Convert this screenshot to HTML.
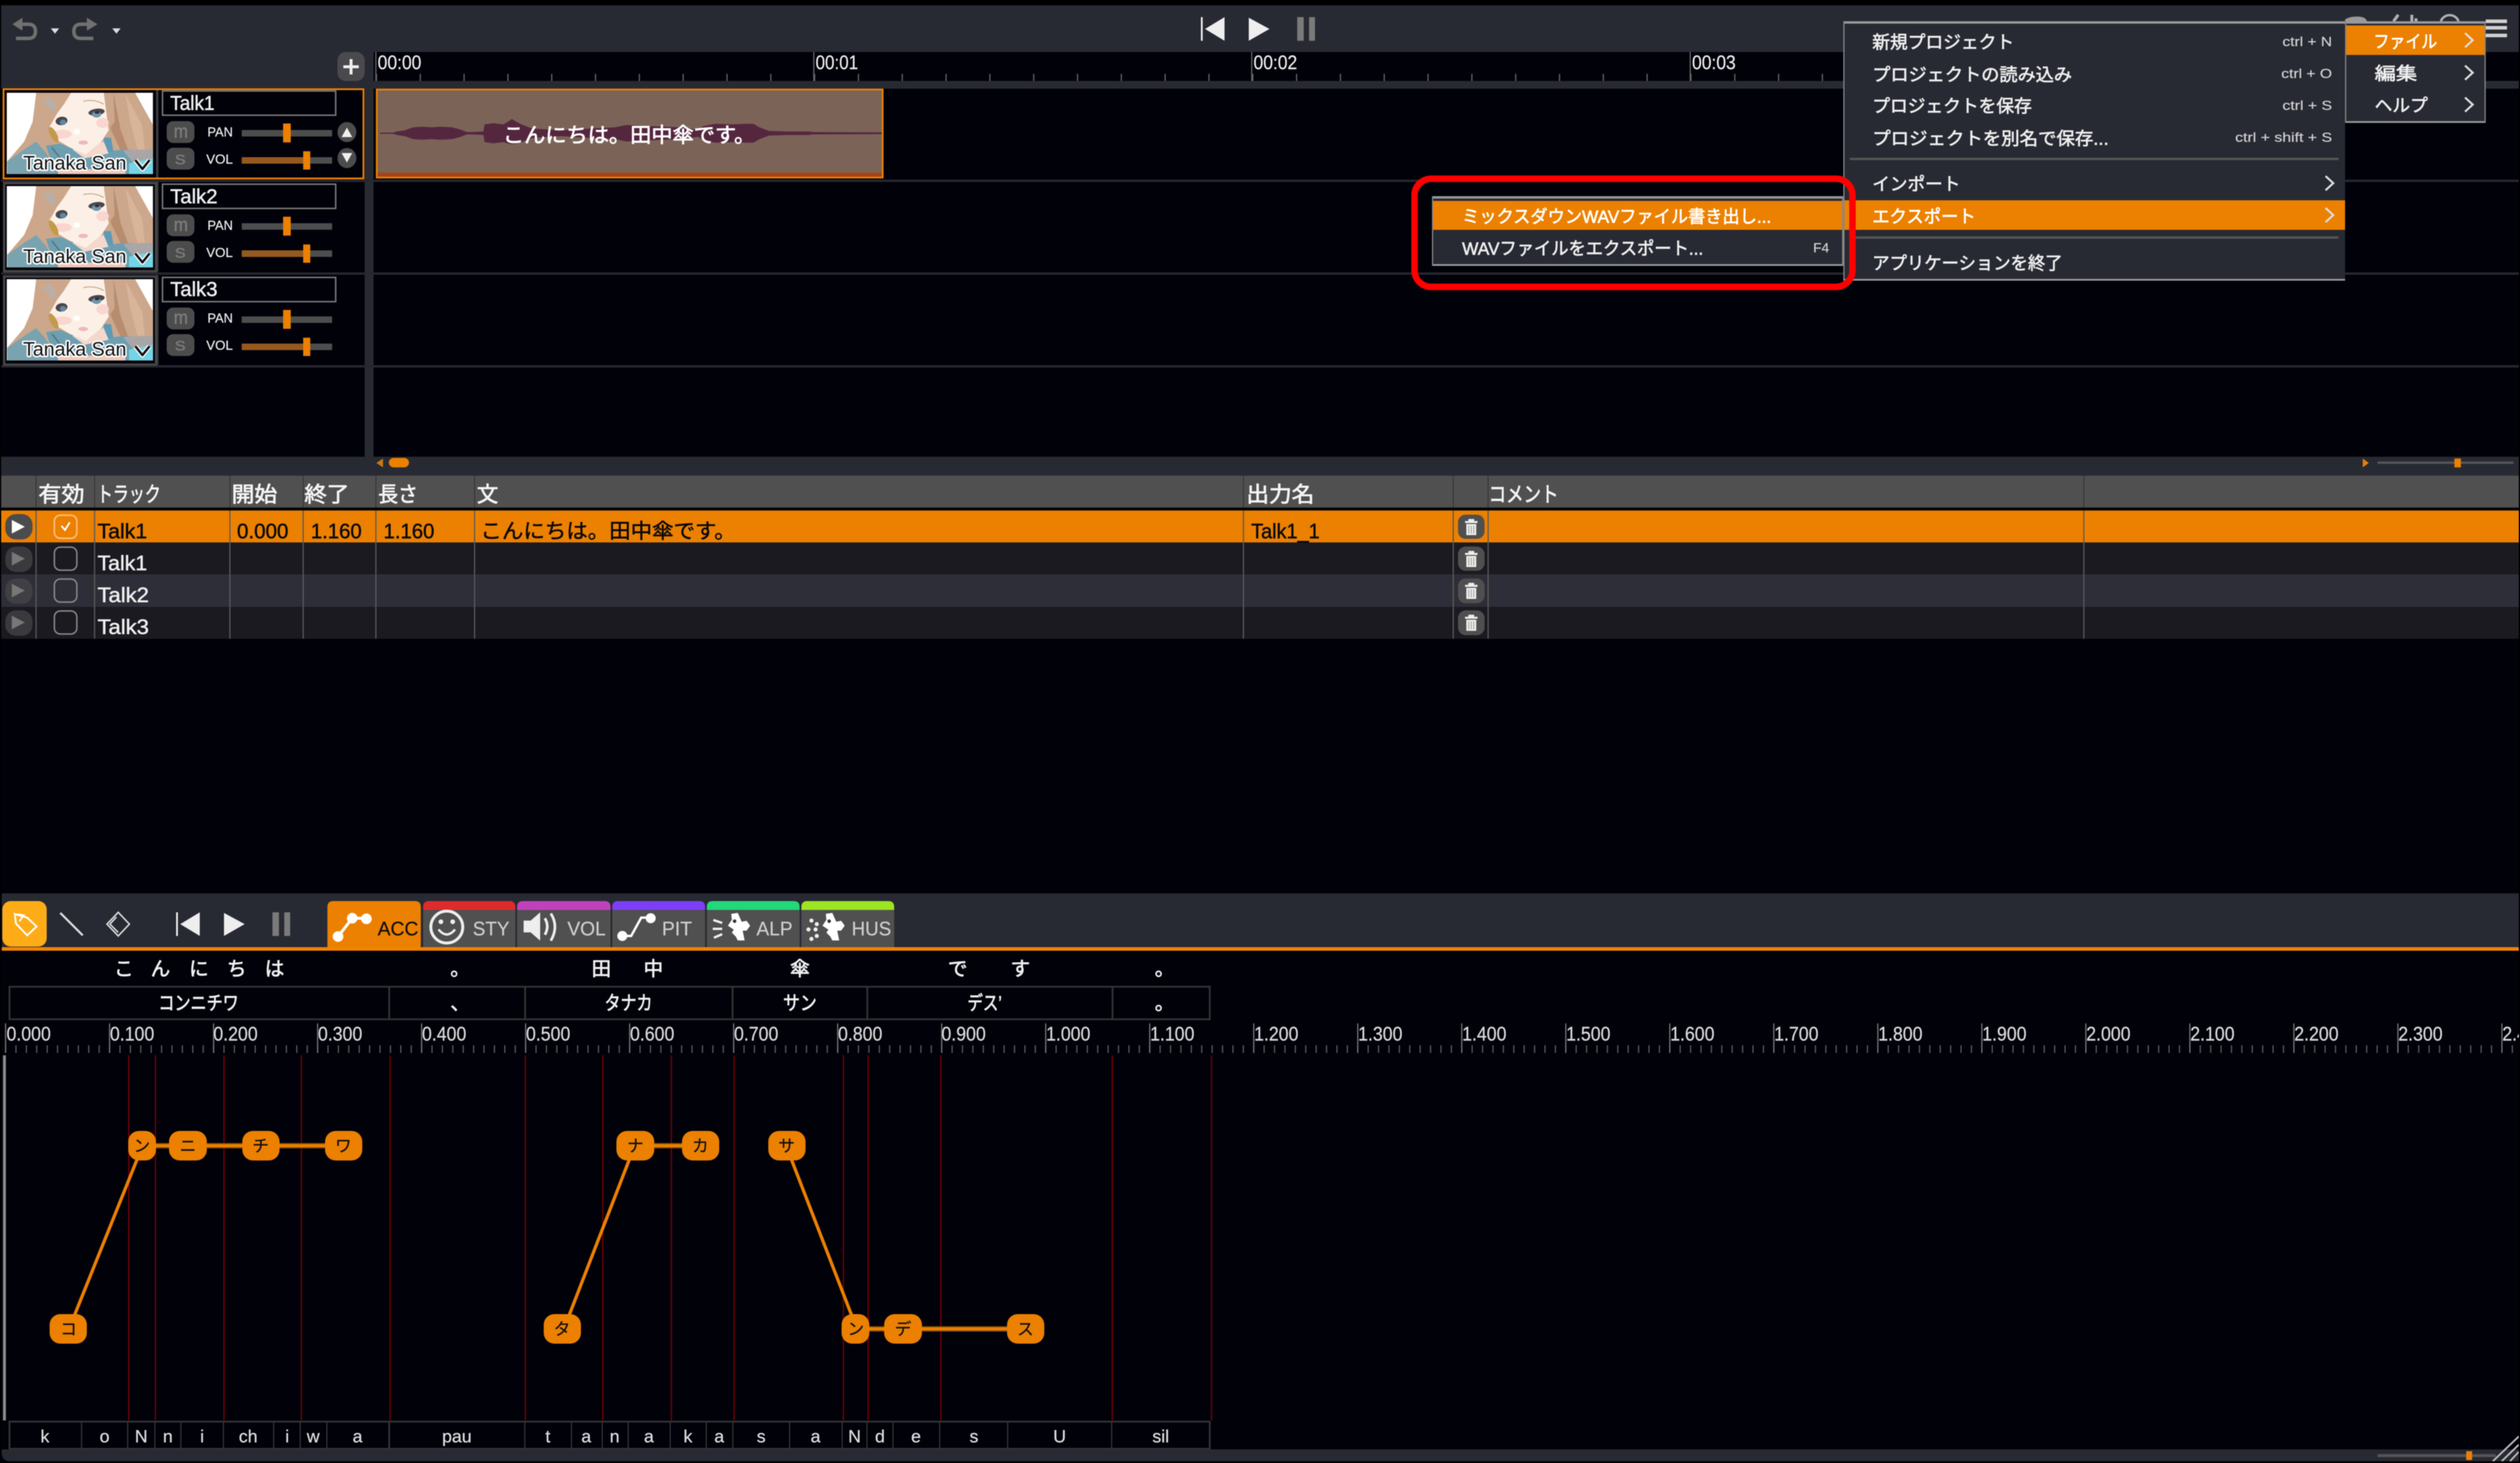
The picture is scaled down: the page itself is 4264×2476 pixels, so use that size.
<!DOCTYPE html>
<html lang="ja">
<head>
<meta charset="utf-8">
<title>Voice editor</title>
<style>
html,body{margin:0;padding:0;background:#01010a;width:4264px;height:2476px;overflow:hidden}
svg{display:block;filter:blur(0.8px)}
text{font-family:"Liberation Sans","Noto Sans CJK JP",sans-serif;color:#eee;fill:currentColor;stroke:currentColor;stroke-width:.7px}
.m{font-size:30px;color:#eee;stroke-width:.9px}
.sc{font-size:22px;color:#cfcfcf;stroke-width:.3px}
.h{font-size:36px;color:#f4f4f4;stroke-width:1.1px}
.b{font-size:35px;color:#0a0a0a}
.w{font-size:35px;color:#eee}
.r{font-size:33px;color:#d8d8d8;stroke-width:.4px}
.n{font-size:28px;color:#111;text-anchor:middle;stroke-width:.4px}
.p{font-size:30px;color:#ddd;text-anchor:middle;stroke-width:.4px}
.k{font-size:33px;color:#f0f0f0;stroke-width:1px}
.t{font-size:33px;color:#ccc;stroke-width:.3px}
.av{font-size:33px;fill:#111;stroke:#fff;stroke-width:5px;paint-order:stroke;stroke-linejoin:round}
.lb{font-size:22px;color:#eee;stroke-width:.3px}
</style>
</head>
<body>
<svg width="4264" height="2476" viewBox="0 0 4264 2476" xmlns="http://www.w3.org/2000/svg">
<defs>
<clipPath id="avc"><rect x="28" y="52" width="606" height="413"/></clipPath>
<g id="avatar" transform="scale(0.40816,0.33333) translate(-28,-52)">
 <g clip-path="url(#avc)">
  <rect x="28" y="52" width="606" height="413" fill="#fff"/>
  <path d="M150,52 L560,52 L634,215 L634,370 L510,345 L360,365 L200,380 L100,385 L30,420 L30,400 L100,300 L135,200Z" fill="#cca78b"/>
  <path d="M440,52 L470,52 L500,240 L530,340 L500,345 L460,240Z" fill="#b88c6e"/>
  <path d="M520,60 L590,220 L600,340 L570,340 L540,200Z" fill="#d8b498"/>
  <path d="M30,400 L100,340 L150,300 L190,355 L230,440 L230,465 L30,465Z" fill="#7aa3b0"/>
  <path d="M190,320 L250,310 L355,365 L510,340 L634,350 L634,465 L230,465Z" fill="#6d9fb0"/>
  <path d="M430,280 L460,280 L470,350 L430,360Z" fill="#5d9ab5"/>
  <path d="M510,345 L634,340 L634,400 L560,420Z" fill="#a9a6a8"/>
  <path d="M535,410 L634,385 L634,465 L535,465Z" fill="#73d5e6"/>
  <path d="M240,440 L520,440 L520,465 L240,465Z" fill="#f0c8b8"/>
  <path d="M300,340 L430,300 L450,360 L350,385Z" fill="#f4d8cc"/>
  <path d="M250,52 L440,52 L452,130 L452,240 L420,300 L355,365 L290,330 L235,290 L205,230 L215,180Z" fill="#fcf0e6"/>
  <path d="M150,52 L295,52 L265,110 L235,160 L210,215 L190,210 L160,160Z" fill="#cca78b"/>
  <path d="M430,52 L470,52 L475,200 L450,240Z" fill="#cca78b"/>
  <path d="M205,70 L180,100 L215,150 L235,130Z" fill="#b8b0a8"/>
  <path d="M345,95 Q390,82 430,110" stroke="#c8a888" stroke-width="5" fill="none"/>
  <ellipse cx="260" cy="262" rx="38" ry="22" fill="#f9d6d0"/>
  <ellipse cx="425" cy="205" rx="26" ry="26" fill="#f9d6d0"/>
  <circle cx="318" cy="250" r="14" fill="#fff"/>
  <ellipse cx="255" cy="195" rx="25" ry="21" transform="rotate(-20 255 195)" fill="#4a474b"/>
  <ellipse cx="261" cy="202" rx="13" ry="14" fill="#5e88a5"/>
  <ellipse cx="400" cy="150" rx="34" ry="17" transform="rotate(-10 400 150)" fill="#4a474b"/>
  <ellipse cx="400" cy="162" rx="19" ry="16" fill="#6e96ae"/>
  <ellipse cx="402" cy="152" rx="10" ry="7" fill="#332f30"/>
  <ellipse cx="345" cy="305" rx="20" ry="11" fill="#eeb8c0"/>
  <ellipse cx="222" cy="265" rx="14" ry="42" transform="rotate(-22 222 265)" fill="#c49a4a"/>
  <path d="M215,330 L260,400" stroke="#55707d" stroke-width="6"/>
 </g>
</g>
<pattern id="tk1" patternUnits="userSpaceOnUse" x="636" y="125" width="74.14" height="12"><rect width="2" height="12" fill="#666"/></pattern>
<pattern id="tk2" patternUnits="userSpaceOnUse" x="8.4" y="1769" width="17.6" height="13"><rect width="2" height="13" fill="#5c5c5c"/></pattern>
<pattern id="tk3" patternUnits="userSpaceOnUse" x="8.4" y="1732" width="176" height="50"><rect width="2" height="50" fill="#777"/></pattern>
<path id="trash" d="M-7,-16 h14 v4 h8 v4 h-30 v-4 h8Z M-12,-6 h24 v22 h-24Z" fill="#eee"/>
<g id="prev"><rect x="298" y="1544" width="3" height="40" fill="#eee"/><path d="M338,1544 V1584 L305,1564Z" fill="#eee"/></g>
<path id="play" d="M379,1545 L414,1564 L379,1584Z" fill="#eee"/>
<g id="pause" fill="#7a7a7a"><rect x="461" y="1544" width="11" height="40"/><rect x="481" y="1544" width="10" height="40"/></g>
<g id="head"><path d="M712,110 L745,105 L765,150 L790,145 L808,170 L790,195 L770,195 L780,245 L745,245 L735,225 L715,205 L725,190 L695,170 L715,140Z" fill="#fff" transform="translate(1000,1510) scale(0.3333) translate(0,0)"/></g>
<g id="tr">
 <rect x="282" y="205" width="47" height="37" rx="11" fill="#4c4c4c"/>
 <rect x="282" y="250" width="47" height="37" rx="11" fill="#4c4c4c"/>
 <rect x="409" y="220" width="153" height="11" fill="#4d4d4d"/>
 <rect x="409" y="266" width="153" height="11" fill="#4d4d4d"/>
 <rect x="409" y="266" width="110" height="11" fill="#96591f"/>
 <rect x="479" y="209" width="13" height="32" fill="#ec8000"/>
 <rect x="513" y="256" width="12" height="31" fill="#ec8000"/>
 <rect x="264" y="150" width="4" height="152" fill="#3a3b40"/>
 <rect x="275" y="154" width="293" height="41" fill="#01010a" stroke="#7a7a7a" stroke-width="2.5"/>
</g>
</defs>

<rect width="4264" height="2476" fill="#01010a"/>
<rect width="4264" height="9" fill="#000"/>

<!-- top toolbar -->
<rect x="2" y="9" width="4260" height="79" fill="#282a33"/>
<rect x="2" y="88" width="630" height="62" fill="#282a33"/>
<rect x="632" y="137" width="3630" height="13" fill="#282a33"/>
<rect x="617" y="150" width="15" height="623" fill="#282a33"/>

<g fill="none" stroke="#707070" stroke-width="6">
 <path d="M27,65 H48 Q60,65 60,53 Q60,41 48,41 H32"/>
 <path d="M158,65 H137 Q125,65 125,53 Q125,41 137,41 H153"/>
</g>
<path d="M38,30 V52 L21,41Z M147,30 V52 L165,41Z" fill="#707070"/>
<path d="M86,48 H100 L93,57Z M190,48 H204 L197,57Z" fill="#ddd"/>

<use href="#prev" transform="translate(1734,-1515)"/>
<use href="#play" transform="translate(1734,-1515)"/>
<use href="#pause" transform="translate(1734,-1515)"/>

<!-- top-right icons peeking out -->
<path d="M3968,36 V33 Q3975,28 3988,28 Q4003,28 4005,36Z" fill="#9a9a9a"/>
<path d="M4050,36 L4058,25 M4081,36 V25 M4088,36 V31" stroke="#b0b0b0" stroke-width="5" fill="none"/>
<path d="M4130,36 A16,16 0 0 1 4160,36" stroke="#b0b0b0" stroke-width="4" fill="none"/>
<g fill="#d0d0d0"><rect x="4206" y="33" width="36" height="6"/><rect x="4206" y="44" width="36" height="6"/><rect x="4206" y="57" width="36" height="6"/></g>

<!-- add button -->
<rect x="571" y="88" width="46" height="49" rx="14" fill="#4a4a4e"/>
<path d="M594,100 V126 M581,113 H607" stroke="#eee" stroke-width="5"/>

<!-- ruler -->
<rect x="632" y="88" width="3630" height="49" fill="#01010a"/>
<rect x="636" y="125" width="3626" height="12" fill="url(#tk1)"/>
<g fill="#666"><rect x="635" y="88" width="2" height="49"/><rect x="1376" y="88" width="2" height="49"/><rect x="2117" y="88" width="2" height="49"/><rect x="2859" y="88" width="2" height="49"/></g>
<text x="639" y="117" font-size="33" textLength="74" lengthAdjust="spacingAndGlyphs" style="stroke-width:.3px">00:00</text>
<text x="1380" y="117" font-size="33" textLength="72" lengthAdjust="spacingAndGlyphs" style="stroke-width:.3px">00:01</text>
<text x="2121" y="117" font-size="33" textLength="74" lengthAdjust="spacingAndGlyphs" style="stroke-width:.3px">00:02</text>
<text x="2863" y="117" font-size="33" textLength="74" lengthAdjust="spacingAndGlyphs" style="stroke-width:.3px">00:03</text>

<!-- track row separators -->
<g fill="#26272e"><rect x="2" y="304" width="4260" height="4"/><rect x="2" y="461" width="4260" height="4"/><rect x="2" y="618" width="4260" height="4"/></g>

<!-- tracks -->
<use href="#tr"/>
<use href="#tr" transform="translate(0,157.75)"/>
<use href="#tr" transform="translate(0,315.5)"/>
<rect x="6" y="151" width="609" height="151" fill="none" stroke="#ec8000" stroke-width="3"/>
<rect x="7" y="310" width="257" height="149" fill="none" stroke="#444" stroke-width="4"/>
<rect x="7" y="468" width="257" height="149" fill="none" stroke="#444" stroke-width="4"/>
<use href="#avatar" transform="translate(11.5,157)"/>
<use href="#avatar" transform="translate(11.5,315)"/>
<use href="#avatar" transform="translate(11.5,472.5)"/>

<text class="av" x="39" y="287" textLength="175" lengthAdjust="spacingAndGlyphs">Tanaka San</text>
<text class="av" x="39" y="445" textLength="175" lengthAdjust="spacingAndGlyphs">Tanaka San</text>
<text class="av" x="39" y="602" textLength="175" lengthAdjust="spacingAndGlyphs">Tanaka San</text>
<g fill="none" stroke-linejoin="round">
 <path d="M229,271 L241,286 L253,271" stroke="#fff" stroke-width="8"/><path d="M229,271 L241,286 L253,271" stroke="#111" stroke-width="4"/>
 <path d="M229,429 L241,444 L253,429" stroke="#fff" stroke-width="8"/><path d="M229,429 L241,444 L253,429" stroke="#111" stroke-width="4"/>
 <path d="M229,586 L241,601 L253,586" stroke="#fff" stroke-width="8"/><path d="M229,586 L241,601 L253,586" stroke="#111" stroke-width="4"/>
</g>

<text x="288" y="186" font-size="34" textLength="75" lengthAdjust="spacingAndGlyphs">Talk1</text>
<text x="288" y="344" font-size="34" textLength="80" lengthAdjust="spacingAndGlyphs">Talk2</text>
<text x="288" y="501" font-size="34" textLength="80" lengthAdjust="spacingAndGlyphs">Talk3</text>

<g>
 <text x="294" y="233" font-size="32" style="color:#7a7a7a" textLength="24" lengthAdjust="spacingAndGlyphs">m</text>
 <text x="296" y="278" font-size="23" style="color:#7a7a7a" textLength="18" lengthAdjust="spacingAndGlyphs">S</text>
 <text x="294" y="391" font-size="32" style="color:#7a7a7a" textLength="24" lengthAdjust="spacingAndGlyphs">m</text>
 <text x="296" y="436" font-size="23" style="color:#7a7a7a" textLength="18" lengthAdjust="spacingAndGlyphs">S</text>
 <text x="294" y="548" font-size="32" style="color:#7a7a7a" textLength="24" lengthAdjust="spacingAndGlyphs">m</text>
 <text x="296" y="593" font-size="23" style="color:#7a7a7a" textLength="18" lengthAdjust="spacingAndGlyphs">S</text>
</g>
<text class="lb" x="351" y="231" textLength="43" lengthAdjust="spacingAndGlyphs">PAN</text>
<text class="lb" x="349" y="277" textLength="45" lengthAdjust="spacingAndGlyphs">VOL</text>
<text class="lb" x="351" y="389" textLength="43" lengthAdjust="spacingAndGlyphs">PAN</text>
<text class="lb" x="349" y="435" textLength="45" lengthAdjust="spacingAndGlyphs">VOL</text>
<text class="lb" x="351" y="546" textLength="43" lengthAdjust="spacingAndGlyphs">PAN</text>
<text class="lb" x="349" y="592" textLength="45" lengthAdjust="spacingAndGlyphs">VOL</text>

<ellipse cx="587" cy="223.5" rx="16" ry="17" fill="#4c4c4c"/>
<ellipse cx="587" cy="267.5" rx="16" ry="17" fill="#4c4c4c"/>
<path d="M587,216 L596,232 H578Z M578,259 H596 L587,275Z" fill="#f0f0f0"/>

<!-- clip -->
<rect x="636" y="150" width="859" height="152" fill="#7b6358"/>
<rect x="638" y="292" width="855" height="8" fill="#a3431a"/>
<path d="M643,224.5 L665,224.5 L672,222.5 L685,220.5 L699,215.5 L715,214.5 L730,215.5 L745,214.5 L765,215.5 L780,219.5 L790,223.5 L800,223.5 L818,222.5 L820,210.5 L835,208.5 L852,210.5 L860,205.5 L866,201.5 L880,209.5 L900,217.5 L950,220.5 L1000,217.5 L1040,215.5 L1060,211.5 L1100,213.5 L1150,215.5 L1182,219.5 L1190,213.5 L1210,209.5 L1240,210.5 L1262,209.5 L1275,209.5 L1285,215.5 L1301,221.5 L1330,222.5 L1368,222.5 L1375,223.5 L1492,224 L1492,227 L1375,227.5 L1368,228.5 L1330,228.5 L1301,229.5 L1285,235.5 L1275,241.5 L1262,241.5 L1240,240.5 L1210,241.5 L1190,237.5 L1182,231.5 L1150,235.5 L1100,237.5 L1060,239.5 L1040,235.5 L1000,233.5 L950,230.5 L900,233.5 L880,241.5 L866,244 L860,243 L852,240.5 L835,242.5 L820,240.5 L818,228.5 L800,227.5 L790,227.5 L780,231.5 L765,235.5 L745,236.5 L730,235.5 L715,236.5 L699,235.5 L685,230.5 L672,228.5 L665,226.5 L643,226.5Z" fill="#55273f"/>
<rect x="637.5" y="151.5" width="856" height="149" fill="none" stroke="#ec8000" stroke-width="3"/>
<text x="851" y="241" font-size="35" style="color:#fff;stroke-width:1px" textLength="427" lengthAdjust="spacingAndGlyphs">こんにちは。田中傘です。</text>

<!-- scroll band -->
<rect x="2" y="773" width="4260" height="32" fill="#282a33"/>
<path d="M648,776 V791 L637,783.5Z" fill="#c97a10"/>
<rect x="658" y="775" width="34" height="16" rx="8" fill="#ec8000"/>
<path d="M3998,776 V791 L4008,783.5Z" fill="#ec8000"/>
<rect x="4023" y="781" width="230" height="4" fill="#555"/>
<rect x="4153" y="776" width="11" height="15" fill="#ec8000"/>

<!-- table -->
<rect x="2" y="805" width="4260" height="54" fill="#505050"/>
<rect x="2" y="859" width="4260" height="5" fill="#050505"/>
<rect x="2" y="864" width="4260" height="54" fill="#ec8000"/>
<rect x="2" y="918" width="4260" height="54" fill="#1a1a20"/>
<rect x="2" y="972" width="4260" height="55" fill="#2d2e38"/>
<rect x="2" y="1027" width="4260" height="54" fill="#1a1a20"/>
<g fill="#5a5a5a">
 <rect x="60" y="864" width="2" height="217"/><rect x="159" y="864" width="2" height="217"/><rect x="388" y="864" width="2" height="217"/><rect x="512" y="864" width="2" height="217"/><rect x="635" y="864" width="2" height="217"/><rect x="802" y="864" width="2" height="217"/><rect x="2103" y="864" width="2" height="217"/><rect x="2458" y="864" width="2" height="217"/><rect x="2517" y="864" width="2" height="217"/><rect x="3525" y="864" width="2" height="217"/>
</g>
<g fill="#3a3a3a">
 <rect x="60" y="805" width="2" height="54"/><rect x="159" y="805" width="2" height="54"/><rect x="388" y="805" width="2" height="54"/><rect x="512" y="805" width="2" height="54"/><rect x="635" y="805" width="2" height="54"/><rect x="802" y="805" width="2" height="54"/><rect x="2103" y="805" width="2" height="54"/><rect x="2458" y="805" width="2" height="54"/><rect x="2517" y="805" width="2" height="54"/><rect x="3525" y="805" width="2" height="54"/>
</g>
<text class="h" x="65" y="849" textLength="78" lengthAdjust="spacingAndGlyphs">有効</text>
<text class="h" x="164" y="849" textLength="108" lengthAdjust="spacingAndGlyphs">トラック</text>
<text class="h" x="392" y="849" textLength="77" lengthAdjust="spacingAndGlyphs">開始</text>
<text class="h" x="515" y="849" textLength="76" lengthAdjust="spacingAndGlyphs">終了</text>
<text class="h" x="640" y="849" textLength="67" lengthAdjust="spacingAndGlyphs">長さ</text>
<text class="h" x="807" y="849">文</text>
<text class="h" x="2109" y="849" textLength="115" lengthAdjust="spacingAndGlyphs">出力名</text>
<text class="h" x="2519" y="849" textLength="118" lengthAdjust="spacingAndGlyphs">コメント</text>

<rect x="9" y="870" width="46" height="43" rx="18" fill="#4c4c4c"/>
<rect x="9" y="925" width="46" height="43" rx="18" fill="#3a3a3e"/>
<rect x="9" y="979" width="46" height="43" rx="18" fill="#3f3f44"/>
<rect x="9" y="1033" width="46" height="43" rx="18" fill="#3a3a3e"/>
<path d="M20,880 L42,891.5 L20,903Z" fill="#fff"/>
<path d="M20,934 L42,945.5 L20,957Z M20,988 L42,999.5 L20,1011Z M20,1042 L42,1053.5 L20,1065Z" fill="#777"/>

<g fill="none" stroke-width="2.5">
 <rect x="92" y="872" width="38" height="39" rx="10" stroke="#ffc080"/>
 <rect x="92" y="926" width="38" height="39" rx="10" stroke="#888"/>
 <rect x="92" y="980" width="38" height="39" rx="10" stroke="#888"/>
 <rect x="92" y="1034" width="38" height="39" rx="10" stroke="#888"/>
</g>
<path d="M104,890 L110,897 L118,884" fill="none" stroke="#fff" stroke-width="3"/>

<text class="b" x="165" y="911" textLength="84" lengthAdjust="spacingAndGlyphs">Talk1</text>
<text class="b" x="401" y="911" font-size="36" textLength="87" lengthAdjust="spacingAndGlyphs">0.000</text>
<text class="b" x="526" y="911" font-size="36" textLength="86" lengthAdjust="spacingAndGlyphs">1.160</text>
<text class="b" x="649" y="911" font-size="36" textLength="86" lengthAdjust="spacingAndGlyphs">1.160</text>
<text class="b" x="813" y="911" textLength="432" lengthAdjust="spacingAndGlyphs">こんにちは。田中傘です。</text>
<text class="b" x="2117" y="911" textLength="116" lengthAdjust="spacingAndGlyphs">Talk1_1</text>
<text class="w" x="165" y="965" textLength="84" lengthAdjust="spacingAndGlyphs">Talk1</text>
<text class="w" x="165" y="1019" textLength="87" lengthAdjust="spacingAndGlyphs">Talk2</text>
<text class="w" x="165" y="1073" textLength="87" lengthAdjust="spacingAndGlyphs">Talk3</text>

<rect x="2467" y="871" width="45" height="41" rx="13" fill="#4f4f4f"/>
<rect x="2467" y="925" width="45" height="41" rx="13" fill="#4f4f4f"/>
<rect x="2467" y="979" width="45" height="42" rx="13" fill="#4f4f4f"/>
<rect x="2467" y="1033" width="45" height="42" rx="13" fill="#4f4f4f"/>
<g transform="translate(2489.5,892) scale(.7,.85)"><use href="#trash"/><path d="M-6,-3 V13 M0,-3 V13 M6,-3 V13" stroke="#999" stroke-width="2"/></g>
<g transform="translate(2489.5,946) scale(.7,.85)"><use href="#trash"/><path d="M-6,-3 V13 M0,-3 V13 M6,-3 V13" stroke="#999" stroke-width="2"/></g>
<g transform="translate(2489.5,1000) scale(.7,.85)"><use href="#trash"/><path d="M-6,-3 V13 M0,-3 V13 M6,-3 V13" stroke="#999" stroke-width="2"/></g>
<g transform="translate(2489.5,1054) scale(.7,.85)"><use href="#trash"/><path d="M-6,-3 V13 M0,-3 V13 M6,-3 V13" stroke="#999" stroke-width="2"/></g>

<!-- lower toolbar -->
<rect x="3" y="1512" width="4259" height="91" fill="#282a33"/>
<rect x="3" y="1603" width="4259" height="6" fill="#f08400"/>
<rect x="4" y="1525" width="75" height="77" rx="14" fill="#fdac17"/>
<path d="M25,1547 L46,1553 L62,1568 L46,1583 L27,1563Z M25,1547 L40,1549 L33,1559" fill="none" stroke="#fff" stroke-width="3"/>
<path d="M102,1545 L140,1583" stroke="#ddd" stroke-width="3.5"/>
<path d="M200,1544 L219,1564 L200,1584 L181,1564Z M197,1552 L186,1564 L200,1578" fill="none" stroke="#ddd" stroke-width="2.5"/>
<use href="#prev"/><use href="#play"/><use href="#pause"/>

<!-- tabs -->
<path d="M554,1603 V1535 Q554,1525 564,1525 H702 Q712,1525 712,1535 V1603Z" fill="#ec8000"/>
<path d="M716,1603 V1535 Q716,1525 726,1525 H862 Q872,1525 872,1535 V1603Z" fill="#505050"/>
<path d="M716,1540 V1535 Q716,1525 726,1525 H862 Q872,1525 872,1535 V1540Z" fill="#dc2c2c"/>
<path d="M875,1603 V1535 Q875,1525 885,1525 H1023 Q1033,1525 1033,1535 V1603Z" fill="#505050"/>
<path d="M875,1540 V1535 Q875,1525 885,1525 H1023 Q1033,1525 1033,1535 V1540Z" fill="#bf42bb"/>
<path d="M1036,1603 V1535 Q1036,1525 1046,1525 H1183 Q1193,1525 1193,1535 V1603Z" fill="#505050"/>
<path d="M1036,1540 V1535 Q1036,1525 1046,1525 H1183 Q1193,1525 1193,1535 V1540Z" fill="#7c3ff5"/>
<path d="M1196,1603 V1535 Q1196,1525 1206,1525 H1343 Q1353,1525 1353,1535 V1603Z" fill="#505050"/>
<path d="M1196,1540 V1535 Q1196,1525 1206,1525 H1343 Q1353,1525 1353,1535 V1540Z" fill="#22d87a"/>
<path d="M1356,1603 V1535 Q1356,1525 1366,1525 H1503 Q1513,1525 1513,1535 V1603Z" fill="#505050"/>
<path d="M1356,1540 V1535 Q1356,1525 1366,1525 H1503 Q1513,1525 1513,1535 V1540Z" fill="#9ce522"/>

<!-- tab icons -->
<g fill="#fff"><circle cx="572" cy="1585" r="9"/><circle cx="596" cy="1554" r="9"/><circle cx="620" cy="1555" r="9"/></g>
<path d="M572,1585 L596,1554 H620" stroke="#fff" stroke-width="5" fill="none"/>
<text x="639" y="1583" class="t" style="color:#111" textLength="69" lengthAdjust="spacingAndGlyphs">ACC</text>

<circle cx="756" cy="1569" r="27" fill="none" stroke="#eee" stroke-width="5"/>
<circle cx="746" cy="1560" r="4" fill="#eee"/><circle cx="766" cy="1560" r="4" fill="#eee"/>
<path d="M742,1573 Q756,1590 770,1573" fill="none" stroke="#eee" stroke-width="4"/>
<text x="800" y="1583" class="t" textLength="62" lengthAdjust="spacingAndGlyphs">STY</text>

<path d="M886,1558 H898 L914,1544 V1592 L898,1578 H886Z" fill="#eee"/>
<path d="M922,1554 Q930,1568 922,1582 M932,1546 Q946,1568 932,1592" fill="none" stroke="#eee" stroke-width="4.5"/>
<text x="960" y="1583" class="t" textLength="65" lengthAdjust="spacingAndGlyphs">VOL</text>

<circle cx="1053" cy="1584" r="8.5" fill="#fff"/><circle cx="1101" cy="1554" r="8.5" fill="#fff"/>
<path d="M1053,1584 H1068 L1085,1553 H1101" fill="none" stroke="#fff" stroke-width="4"/>
<text x="1120" y="1583" class="t" textLength="51" lengthAdjust="spacingAndGlyphs">PIT</text>

<path d="M1207,1557 L1222,1562 M1206,1572 H1222 M1208,1587 L1222,1581" stroke="#eee" stroke-width="4"/>
<use href="#head"/>
<circle cx="1243" cy="1559" r="3" fill="#333"/>
<text x="1280" y="1583" class="t" textLength="61" lengthAdjust="spacingAndGlyphs">ALP</text>

<g fill="#eee"><circle cx="1373" cy="1558" r="3.5"/><circle cx="1382" cy="1564" r="3.5"/><circle cx="1368" cy="1573" r="3.5"/><circle cx="1380" cy="1573" r="3.5"/><circle cx="1382" cy="1584" r="3.5"/><circle cx="1373" cy="1589" r="3.5"/></g>
<use href="#head" transform="translate(160,0)"/>
<circle cx="1403" cy="1559" r="3" fill="#333"/>
<text x="1441" y="1583" class="t" textLength="67" lengthAdjust="spacingAndGlyphs">HUS</text>

<!-- sentence row -->
<g>
<text class="k" x="193" y="1651">こ</text>
<text class="k" x="255" y="1651">ん</text>
<text class="k" x="320" y="1651">に</text>
<text class="k" x="384" y="1651">ち</text>
<text class="k" x="448" y="1651">は</text>
<text class="k" x="762" y="1651">。</text>
<text class="k" x="1001" y="1651">田</text>
<text class="k" x="1089" y="1651">中</text>
<text class="k" x="1337" y="1651">傘</text>
<text class="k" x="1604" y="1651">で</text>
<text class="k" x="1710" y="1651">す</text>
<text class="k" x="1954" y="1651">。</text>
</g>

<!-- kana row -->
<rect x="16" y="1670" width="2031" height="55" fill="none" stroke="#333" stroke-width="3"/>
<g fill="#333"><rect x="657" y="1670" width="3" height="55"/><rect x="887" y="1670" width="3" height="55"/><rect x="1238" y="1670" width="3" height="55"/><rect x="1466" y="1670" width="3" height="55"/><rect x="1881" y="1670" width="3" height="55"/></g>
<text class="k" x="268" y="1709" textLength="136" lengthAdjust="spacingAndGlyphs">コンニチワ</text>
<text class="k" x="762" y="1709">、</text>
<text class="k" x="1023" y="1709" textLength="81" lengthAdjust="spacingAndGlyphs">タナカ</text>
<text class="k" x="1325" y="1709" textLength="57" lengthAdjust="spacingAndGlyphs">サン</text>
<text class="k" x="1637" y="1709" textLength="58" lengthAdjust="spacingAndGlyphs">デス’</text>
<text class="k" x="1954" y="1709">。</text>

<!-- time ruler -->
<rect x="8" y="1769" width="4254" height="13" fill="url(#tk2)"/>
<rect x="8" y="1732" width="4254" height="50" fill="url(#tk3)"/>
<g>
<text class="r" x="11" y="1761" textLength="75" lengthAdjust="spacingAndGlyphs">0.000</text>
<text class="r" x="186" y="1761" textLength="75" lengthAdjust="spacingAndGlyphs">0.100</text>
<text class="r" x="361" y="1761" textLength="75" lengthAdjust="spacingAndGlyphs">0.200</text>
<text class="r" x="538" y="1761" textLength="75" lengthAdjust="spacingAndGlyphs">0.300</text>
<text class="r" x="714" y="1761" textLength="75" lengthAdjust="spacingAndGlyphs">0.400</text>
<text class="r" x="890" y="1761" textLength="75" lengthAdjust="spacingAndGlyphs">0.500</text>
<text class="r" x="1066" y="1761" textLength="75" lengthAdjust="spacingAndGlyphs">0.600</text>
<text class="r" x="1242" y="1761" textLength="75" lengthAdjust="spacingAndGlyphs">0.700</text>
<text class="r" x="1418" y="1761" textLength="75" lengthAdjust="spacingAndGlyphs">0.800</text>
<text class="r" x="1593" y="1761" textLength="75" lengthAdjust="spacingAndGlyphs">0.900</text>
<text class="r" x="1770" y="1761" textLength="75" lengthAdjust="spacingAndGlyphs">1.000</text>
<text class="r" x="1946" y="1761" textLength="75" lengthAdjust="spacingAndGlyphs">1.100</text>
<text class="r" x="2122" y="1761" textLength="75" lengthAdjust="spacingAndGlyphs">1.200</text>
<text class="r" x="2298" y="1761" textLength="75" lengthAdjust="spacingAndGlyphs">1.300</text>
<text class="r" x="2474" y="1761" textLength="75" lengthAdjust="spacingAndGlyphs">1.400</text>
<text class="r" x="2650" y="1761" textLength="75" lengthAdjust="spacingAndGlyphs">1.500</text>
<text class="r" x="2826" y="1761" textLength="75" lengthAdjust="spacingAndGlyphs">1.600</text>
<text class="r" x="3002" y="1761" textLength="75" lengthAdjust="spacingAndGlyphs">1.700</text>
<text class="r" x="3178" y="1761" textLength="75" lengthAdjust="spacingAndGlyphs">1.800</text>
<text class="r" x="3354" y="1761" textLength="75" lengthAdjust="spacingAndGlyphs">1.900</text>
<text class="r" x="3530" y="1761" textLength="75" lengthAdjust="spacingAndGlyphs">2.000</text>
<text class="r" x="3706" y="1761" textLength="75" lengthAdjust="spacingAndGlyphs">2.100</text>
<text class="r" x="3882" y="1761" textLength="75" lengthAdjust="spacingAndGlyphs">2.200</text>
<text class="r" x="4058" y="1761" textLength="75" lengthAdjust="spacingAndGlyphs">2.300</text>
<text class="r" x="4234" y="1761" textLength="75" lengthAdjust="spacingAndGlyphs">2.400</text>
</g>

<!-- editor lines -->
<rect x="5" y="1786" width="5" height="618" fill="#8a8a8a"/>
<g fill="#7d0000">
<rect x="217" y="1786" width="2" height="618"/><rect x="262" y="1786" width="2" height="618"/><rect x="378" y="1786" width="2" height="618"/><rect x="509" y="1786" width="2" height="618"/><rect x="659" y="1786" width="2" height="618"/><rect x="888" y="1786" width="2" height="618"/><rect x="1019" y="1786" width="2" height="618"/><rect x="1135" y="1786" width="2" height="618"/><rect x="1241" y="1786" width="2" height="618"/><rect x="1426" y="1786" width="2" height="618"/><rect x="1468" y="1786" width="2" height="618"/><rect x="1591" y="1786" width="2" height="618"/><rect x="1881" y="1786" width="2" height="618"/><rect x="2049" y="1786" width="2" height="618"/>
</g>

<!-- accent links -->
<g stroke="#8a5000" stroke-width="9"><path d="M264,1939 H286 M350,1939 H410 M473,1939 H550 M1107,1939 H1154 M1471,2249 H1496 M1560,2249 H1704"/></g>
<g stroke="#ec8000" stroke-width="5"><path d="M264,1939 H286 M350,1939 H410 M473,1939 H550 M1107,1939 H1154 M1471,2249 H1496 M1560,2249 H1704"/></g>
<g stroke="#ec8000" stroke-width="5.5" fill="none"><path d="M126,2226 L232,1962 M963,2226 L1065,1962 M1339,1962 L1441,2226"/></g>
<g fill="#ec8000">
<rect x="84" y="2224" width="63" height="50" rx="18"/>
<rect x="217" y="1914" width="47" height="50" rx="18"/>
<rect x="286" y="1914" width="64" height="50" rx="18"/>
<rect x="410" y="1914" width="63" height="50" rx="18"/>
<rect x="550" y="1914" width="63" height="50" rx="18"/>
<rect x="920" y="2224" width="63" height="50" rx="18"/>
<rect x="1043" y="1914" width="64" height="50" rx="18"/>
<rect x="1154" y="1914" width="63" height="50" rx="18"/>
<rect x="1300" y="1914" width="63" height="50" rx="18"/>
<rect x="1424" y="2224" width="47" height="50" rx="18"/>
<rect x="1496" y="2224" width="64" height="50" rx="18"/>
<rect x="1704" y="2224" width="63" height="50" rx="18"/>
</g>
<text class="n" x="116" y="2259">コ</text>
<text class="n" x="240" y="1949">ン</text>
<text class="n" x="318" y="1949">ニ</text>
<text class="n" x="441" y="1949">チ</text>
<text class="n" x="581" y="1949">ワ</text>
<text class="n" x="951" y="2259">タ</text>
<text class="n" x="1075" y="1949">ナ</text>
<text class="n" x="1185" y="1949">カ</text>
<text class="n" x="1331" y="1949">サ</text>
<text class="n" x="1448" y="2259">ン</text>
<text class="n" x="1528" y="2259">デ</text>
<text class="n" x="1735" y="2259">ス</text>

<!-- phoneme row -->
<g fill="none" stroke="#333" stroke-width="3">
<rect x="16" y="2406" width="2031" height="46"/>
</g>
<g fill="#333">
<rect x="137" y="2406" width="2" height="46"/><rect x="215" y="2406" width="2" height="46"/><rect x="261" y="2406" width="2" height="46"/><rect x="305" y="2406" width="2" height="46"/><rect x="377" y="2406" width="2" height="46"/><rect x="462" y="2406" width="2" height="46"/><rect x="507" y="2406" width="2" height="46"/><rect x="552" y="2406" width="2" height="46"/><rect x="657" y="2406" width="3" height="46"/><rect x="887" y="2406" width="2" height="46"/><rect x="966" y="2406" width="2" height="46"/><rect x="1018" y="2406" width="2" height="46"/><rect x="1062" y="2406" width="2" height="46"/><rect x="1133" y="2406" width="2" height="46"/><rect x="1194" y="2406" width="2" height="46"/><rect x="1239" y="2406" width="2" height="46"/><rect x="1335" y="2406" width="2" height="46"/><rect x="1424" y="2406" width="2" height="46"/><rect x="1466" y="2406" width="2" height="46"/><rect x="1510" y="2406" width="2" height="46"/><rect x="1589" y="2406" width="2" height="46"/><rect x="1704" y="2406" width="2" height="46"/><rect x="1880" y="2406" width="2" height="46"/>
</g>
<text class="p" x="76" y="2441">k</text><text class="p" x="177" y="2441">o</text><text class="p" x="239" y="2441">N</text><text class="p" x="284" y="2441">n</text><text class="p" x="342" y="2441">i</text><text class="p" x="420" y="2441">ch</text><text class="p" x="486" y="2441">i</text><text class="p" x="530" y="2441">w</text><text class="p" x="605" y="2441">a</text><text class="p" x="773" y="2441">pau</text><text class="p" x="927" y="2441">t</text><text class="p" x="992" y="2441">a</text><text class="p" x="1040" y="2441">n</text><text class="p" x="1098" y="2441">a</text><text class="p" x="1164" y="2441">k</text><text class="p" x="1217" y="2441">a</text><text class="p" x="1288" y="2441">s</text><text class="p" x="1380" y="2441">a</text><text class="p" x="1446" y="2441">N</text><text class="p" x="1489" y="2441">d</text><text class="p" x="1550" y="2441">e</text><text class="p" x="1648" y="2441">s</text><text class="p" x="1793" y="2441">U</text><text class="p" x="1964" y="2441">sil</text>

<!-- bottom band -->
<path d="M3,2453 H4262 V2473 H18 Q3,2473 3,2458Z" fill="#282a33"/>
<rect x="4023" y="2461" width="200" height="5" fill="#555"/>
<rect x="4173" y="2456" width="10" height="15" fill="#ec8000"/>
<g stroke="#bbb" stroke-width="3"><path d="M4262,2431 L4218,2473 M4262,2445 L4233,2473 M4262,2457 L4247,2473"/></g>

<!-- main menu -->
<rect x="3119" y="36" width="849" height="439" fill="#282a33"/>
<rect x="3119" y="36" width="849" height="4" fill="#9a9a9a"/>
<rect x="3119" y="472" width="849" height="3" fill="#9a9a9a"/>
<rect x="3119" y="36" width="2" height="439" fill="#888"/>
<rect x="3130" y="267" width="827" height="4" fill="#555"/>
<rect x="3130" y="400" width="827" height="4" fill="#555"/>
<rect x="3121" y="339" width="847" height="50" fill="#ec8000"/>
<text class="m" x="3168" y="82" textLength="240" lengthAdjust="spacingAndGlyphs">新規プロジェクト</text>
<text class="m" x="3168" y="137" textLength="338" lengthAdjust="spacingAndGlyphs">プロジェクトの読み込み</text>
<text class="m" x="3168" y="190" textLength="270" lengthAdjust="spacingAndGlyphs">プロジェクトを保存</text>
<text class="m" x="3168" y="245" textLength="400" lengthAdjust="spacingAndGlyphs">プロジェクトを別名で保存...</text>
<text class="m" x="3168" y="322" textLength="149" lengthAdjust="spacingAndGlyphs">インポート</text>
<text class="m" x="3168" y="377" textLength="175" lengthAdjust="spacingAndGlyphs" style="color:#fff">エクスポート</text>
<text class="m" x="3168" y="456" textLength="322" lengthAdjust="spacingAndGlyphs">アプリケーションを終了</text>
<text class="sc" x="3862" y="78" textLength="84" lengthAdjust="spacingAndGlyphs">ctrl + N</text>
<text class="sc" x="3860" y="132" textLength="86" lengthAdjust="spacingAndGlyphs">ctrl + O</text>
<text class="sc" x="3862" y="186" textLength="84" lengthAdjust="spacingAndGlyphs">ctrl + S</text>
<text class="sc" x="3782" y="240" textLength="164" lengthAdjust="spacingAndGlyphs">ctrl + shift + S</text>
<path d="M3935,298 L3948,310 L3935,322 M3935,352 L3948,364 L3935,376" fill="none" stroke="#ddd" stroke-width="3.5"/>

<!-- right menu -->
<rect x="3968" y="36" width="238" height="172" fill="#282a33"/>
<rect x="3968" y="36" width="238" height="4" fill="#9a9a9a"/>
<rect x="3968" y="205" width="238" height="3" fill="#9a9a9a"/>
<rect x="3968" y="36" width="2" height="172" fill="#888"/>
<rect x="4204" y="36" width="2" height="172" fill="#888"/>
<rect x="3970" y="43" width="234" height="50" fill="#ec8000"/>
<text class="m" x="4016" y="81" textLength="108" lengthAdjust="spacingAndGlyphs" style="color:#fff">ファイル</text>
<text class="m" x="4018" y="135" textLength="72" lengthAdjust="spacingAndGlyphs">編集</text>
<text class="m" x="4018" y="189" textLength="90" lengthAdjust="spacingAndGlyphs">ヘルプ</text>
<path d="M4171,56 L4184,68 L4171,80 M4171,111 L4184,123 L4171,135 M4171,165 L4184,177 L4171,189" fill="none" stroke="#ddd" stroke-width="3.5"/>

<!-- export submenu -->
<rect x="2423" y="332" width="696" height="118" fill="#282a33"/>
<rect x="2423" y="332" width="696" height="4" fill="#9a9a9a"/>
<rect x="2423" y="447" width="696" height="3" fill="#9a9a9a"/>
<rect x="2423" y="332" width="2" height="118" fill="#888"/>
<rect x="3117" y="332" width="2" height="118" fill="#888"/>
<rect x="2425" y="340" width="692" height="49" fill="#ec8000"/>
<text class="m" x="2474" y="377" textLength="523" lengthAdjust="spacingAndGlyphs" style="color:#fff">ミックスダウンWAVファイル書き出し...</text>
<text class="m" x="2474" y="431" textLength="408" lengthAdjust="spacingAndGlyphs">WAVファイルをエクスポート...</text>
<text class="sc" x="3068" y="427" font-size="24" textLength="27" lengthAdjust="spacingAndGlyphs">F4</text>

<!-- red highlight -->
<rect x="2393.5" y="302.5" width="741" height="183" rx="28" fill="none" stroke="#ff0000" stroke-width="11"/>

<rect x="4262" y="0" width="2" height="2476" fill="#000"/>
<rect x="0" y="0" width="2" height="2476" fill="#000"/>
<rect x="0" y="2473" width="4264" height="3" fill="#000"/>
</svg>
</body>
</html>
